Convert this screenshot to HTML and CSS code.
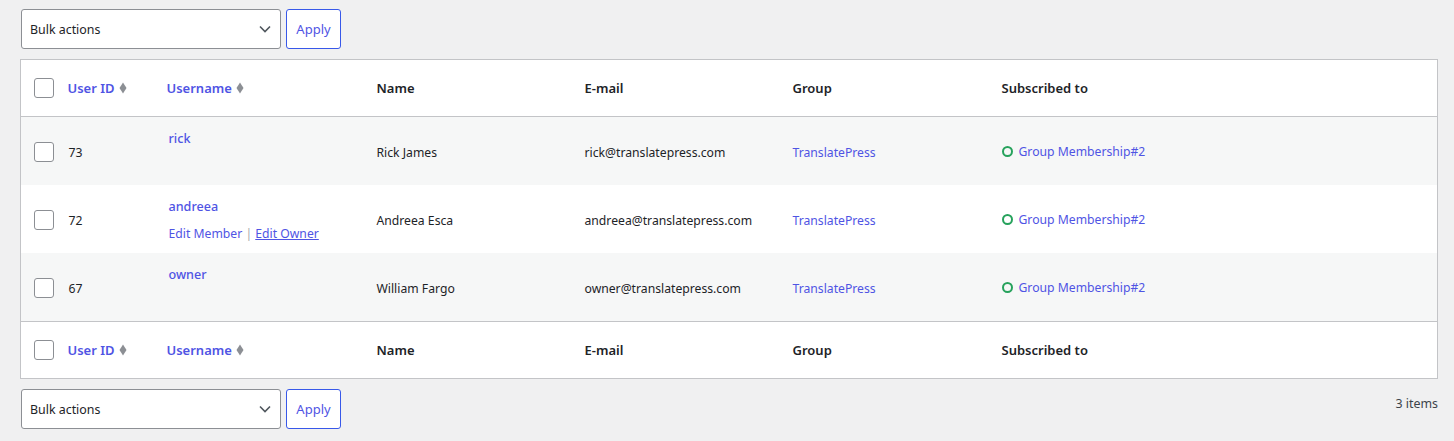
FILE: index.html
```html
<!DOCTYPE html>
<html lang="en">
<head>
<meta charset="utf-8">
<title>Members</title>
<link rel="stylesheet" href="styles.css">
</head>
<body>
<div class="wrap">
  <div class="tablenav top">
    <div class="bulk">
      <div class="select"><span>Bulk actions</span>
        <svg class="chev" width="12" height="8" viewBox="0 0 12 8"><path d="M1 1.5l5 5 5-5" fill="none" stroke="#50575e" stroke-width="1.6"/></svg>
      </div>
      <button class="apply">Apply</button>
    </div>
  </div>

  <table class="list">
    <colgroup>
      <col class="c-cb"><col class="c-id"><col class="c-user"><col class="c-name"><col class="c-mail"><col class="c-group"><col>
    </colgroup>
    <thead>
      <tr>
        <th class="cb"><span class="box"></span></th>
        <th><a class="sort">User ID <svg class="dia" width="8" height="12" viewBox="0 0 8 12"><path d="M4 0.5L7.5 6 4 11.5 0.5 6z" fill="#8c8f94"/></svg></a></th>
        <th><a class="sort">Username <svg class="dia" width="8" height="12" viewBox="0 0 8 12"><path d="M4 0.5L7.5 6 4 11.5 0.5 6z" fill="#8c8f94"/></svg></a></th>
        <th>Name</th>
        <th>E-mail</th>
        <th>Group</th>
        <th>Subscribed to</th>
      </tr>
    </thead>
    <tbody>
      <tr class="alt">
        <td class="cb"><span class="box"></span></td>
        <td class="id">73</td>
        <td class="user"><a class="uname">rick</a><div class="actions hidden"><a>Edit Member</a> <span class="sep">|</span> <a class="u">Edit Owner</a></div></td>
        <td>Rick James</td>
        <td>rick@translatepress.com</td>
        <td><a>TranslatePress</a></td>
        <td><span class="sub"><span class="ring"></span><a>Group Membership#2</a></span></td>
      </tr>
      <tr>
        <td class="cb"><span class="box"></span></td>
        <td class="id">72</td>
        <td class="user"><a class="uname">andreea</a><div class="actions"><a>Edit Member</a> <span class="sep">|</span> <a class="u">Edit Owner</a></div></td>
        <td>Andreea Esca</td>
        <td>andreea@translatepress.com</td>
        <td><a>TranslatePress</a></td>
        <td><span class="sub"><span class="ring"></span><a>Group Membership#2</a></span></td>
      </tr>
      <tr class="alt">
        <td class="cb"><span class="box"></span></td>
        <td class="id">67</td>
        <td class="user"><a class="uname">owner</a><div class="actions hidden"><a>Edit Member</a> <span class="sep">|</span> <a class="u">Edit Owner</a></div></td>
        <td>William Fargo</td>
        <td>owner@translatepress.com</td>
        <td><a>TranslatePress</a></td>
        <td><span class="sub"><span class="ring"></span><a>Group Membership#2</a></span></td>
      </tr>
    </tbody>
    <tfoot>
      <tr>
        <th class="cb"><span class="box"></span></th>
        <th><a class="sort">User ID <svg class="dia" width="8" height="12" viewBox="0 0 8 12"><path d="M4 0.5L7.5 6 4 11.5 0.5 6z" fill="#8c8f94"/></svg></a></th>
        <th><a class="sort">Username <svg class="dia" width="8" height="12" viewBox="0 0 8 12"><path d="M4 0.5L7.5 6 4 11.5 0.5 6z" fill="#8c8f94"/></svg></a></th>
        <th>Name</th>
        <th>E-mail</th>
        <th>Group</th>
        <th>Subscribed to</th>
      </tr>
    </tfoot>
  </table>

  <div class="tablenav bottom">
    <div class="bulk">
      <div class="select"><span>Bulk actions</span>
        <svg class="chev" width="12" height="8" viewBox="0 0 12 8"><path d="M1 1.5l5 5 5-5" fill="none" stroke="#50575e" stroke-width="1.6"/></svg>
      </div>
      <button class="apply">Apply</button>
    </div>
    <div class="count">3 items</div>
  </div>
</div>
</body>
</html>
```

FILE: styles.css
```css
html, body {
  margin: 0;
  padding: 0;
  background: #f0f0f1;
}
body {
  font-family: "Noto Sans", "Open Sans", sans-serif;
  font-size: 12.2px;
  color: #1d2327;
}
.wrap {
  padding: 9px 16px 0 20px;
}
.tablenav {
  display: flex;
  justify-content: space-between;
  align-items: flex-start;
  height: 40px;
}
.tablenav.top {
  margin: 0 0 10px 1px;
}
.tablenav.bottom {
  margin: 10px 0 0 1px;
}
.bulk {
  display: flex;
  gap: 5px;
}
.select {
  box-sizing: border-box;
  width: 260px;
  height: 40px;
  background: #fff;
  border: 1px solid #8c8f94;
  border-radius: 3px;
  display: flex;
  align-items: center;
  justify-content: space-between;
  padding: 0 9px 0 8px;
  font-size: 12.4px;
  color: #1d2327;
}
.apply {
  box-sizing: border-box;
  width: 55px;
  height: 40px;
  background: #fff;
  border: 1px solid #3858e9;
  border-radius: 3px;
  color: #4f54e4;
  font-family: inherit;
  font-size: 13px;
  padding: 0;
}
.count {
  padding-top: 6px;
  font-size: 12.4px;
  color: #3c434a;
}
.list {
  width: 1418px;
  border: 1px solid #c3c4c7;
  border-collapse: collapse;
  table-layout: fixed;
  background: #fff;
}
.c-cb { width: 47px; }
.c-id { width: 99px; }
.c-user { width: 210px; }
.c-name { width: 208px; }
.c-mail { width: 208px; }
.c-group { width: 209px; }
th, td {
  padding: 0;
  text-align: left;
  vertical-align: middle;
}
thead th, tfoot th {
  height: 56px;
  font-weight: 600;
  font-size: 13px;
  color: #1d2327;
}
thead tr { border-bottom: 1px solid #c3c4c7; }
tfoot tr { border-top: 1px solid #c3c4c7; }
tbody td {
  height: 66px;
  padding-top: 2px;
}
tbody tr.alt { background: #f6f7f7; }
.cb { padding-left: 13px; }
.box {
  display: block;
  box-sizing: border-box;
  width: 20px;
  height: 20px;
  border: 1px solid #8c8f94;
  border-radius: 3px;
  background: #fff;
}
a {
  color: #4f54e4;
  text-decoration: none;
}
.sort {
  display: inline-flex;
  align-items: center;
  gap: 4px;
}
.dia { display: block; }
td.id { padding-left: 1px; }
td.user { padding-left: 2px; }
.uname {
  display: block;
  line-height: 20px;
  font-size: 12.6px;
  font-weight: 500;
}
.actions {
  margin-top: 7px;
  line-height: 20px;
}
.actions.hidden { visibility: hidden; }
.actions .u { text-decoration: underline; }
.sep { color: #a7aaad; }
.sub {
  display: inline-flex;
  align-items: center;
  gap: 6px;
}
.ring {
  box-sizing: border-box;
  width: 11px;
  height: 11px;
  border: 2px solid #26a25c;
  border-radius: 50%;
}
```
